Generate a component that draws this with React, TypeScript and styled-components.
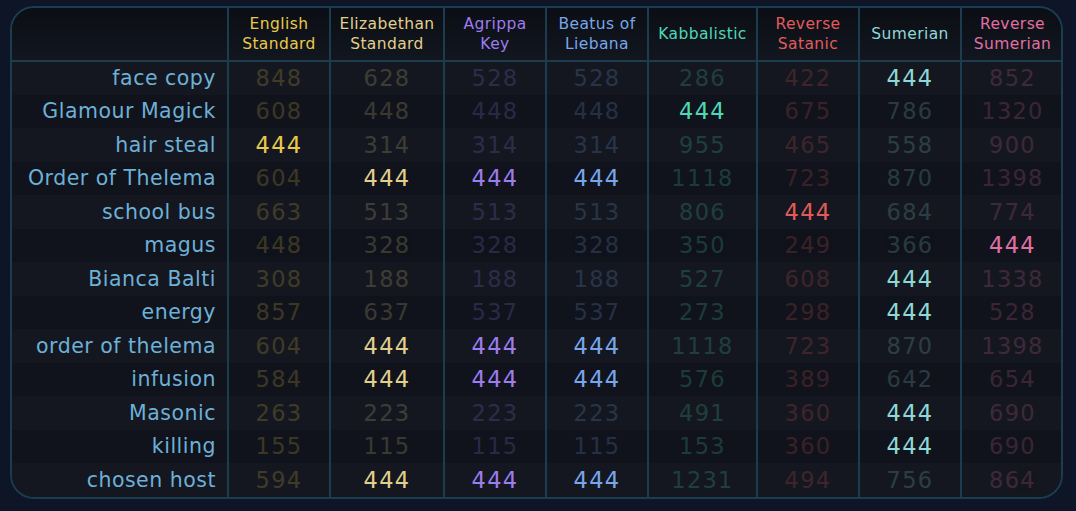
import styled, { createGlobalStyle } from 'styled-components';

const GlobalStyle = createGlobalStyle`
  body {
    margin: 0;
    background: #0e1526;
    font-family: 'DejaVu Sans', 'Liberation Sans', sans-serif;
  }
`;

type Cipher = {
  name: string[];
  color: string;
  width: number;
};

const ciphers: Cipher[] = [
  { name: ['English', 'Standard'], color: '#e8c94a', width: 102 },
  { name: ['Elizabethan', 'Standard'], color: '#e2cf8c', width: 114 },
  { name: ['Agrippa', 'Key'], color: '#9d7cec', width: 102 },
  { name: ['Beatus of', 'Liebana'], color: '#78a6ea', width: 102 },
  { name: ['Kabbalistic'], color: '#4ed8b8', width: 109 },
  { name: ['Reverse', 'Satanic'], color: '#e05c5c', width: 102 },
  { name: ['Sumerian'], color: '#8ed8d8', width: 102 },
  { name: ['Reverse', 'Sumerian'], color: '#e070a2', width: 102 },
];

const rows: [string, number[]][] = [
  ['face copy', [848, 628, 528, 528, 286, 422, 444, 852]],
  ['Glamour Magick', [608, 448, 448, 448, 444, 675, 786, 1320]],
  ['hair steal', [444, 314, 314, 314, 955, 465, 558, 900]],
  ['Order of Thelema', [604, 444, 444, 444, 1118, 723, 870, 1398]],
  ['school bus', [663, 513, 513, 513, 806, 444, 684, 774]],
  ['magus', [448, 328, 328, 328, 350, 249, 366, 444]],
  ['Bianca Balti', [308, 188, 188, 188, 527, 608, 444, 1338]],
  ['energy', [857, 637, 537, 537, 273, 298, 444, 528]],
  ['order of thelema', [604, 444, 444, 444, 1118, 723, 870, 1398]],
  ['infusion', [584, 444, 444, 444, 576, 389, 642, 654]],
  ['Masonic', [263, 223, 223, 223, 491, 360, 444, 690]],
  ['killing', [155, 115, 115, 115, 153, 360, 444, 690]],
  ['chosen host', [594, 444, 444, 444, 1231, 494, 756, 864]],
];

const Page = styled.main`
  padding: 6px 13px 0 10px;
`;

const Frame = styled.div`
  border: 2px solid #1c3d4f;
  border-radius: 24px;
  overflow: hidden;
  width: 1049px;
`;

const Table = styled.table`
  width: 100%;
  table-layout: fixed;
  border-collapse: collapse;
`;

const HeadRow = styled.tr`
  background: linear-gradient(180deg, #0b0e14 0%, #12161f 100%);
  height: 53px;
`;

const HeadCell = styled.th<{ $color: string }>`
  color: ${(p) => p.$color};
  font-size: 15.5px;
  letter-spacing: 0.4px;
  font-weight: 500;
  line-height: 20px;
  text-align: center;
  padding: 0;
  border-left: 2px solid #1c3d4f;
  border-bottom: 2px solid #1c3d4f;
`;

const Corner = styled.th`
  border-bottom: 2px solid #1c3d4f;
`;

const Row = styled.tr<{ $odd: boolean }>`
  height: 33.5px;
  background: ${(p) => (p.$odd ? '#14171f' : '#10131b')};
  & + & > td {
    border-top: 2px solid #1c3d4f;
  }
`;

const Label = styled.td`
  color: #6db0d8;
  font-size: 20.5px;
  letter-spacing: 0.5px;
  text-align: right;
  padding: 0 11px 0 0;
  white-space: nowrap;
`;

const Value = styled.td<{ $color: string; $hit: boolean }>`
  color: ${(p) => p.$color};
  opacity: ${(p) => (p.$hit ? 1 : 0.2)};
  font-size: 22.5px;
  letter-spacing: 1.3px;
  text-align: center;
  padding: 0;
  border-left: 2px solid #1c3d4f;
`;

export default function App() {
  return (
    <Page>
      <GlobalStyle />
      <Frame>
        <Table>
          <colgroup>
            <col style={{ width: 216 }} />
            {ciphers.map((c, i) => (
              <col key={i} style={{ width: c.width }} />
            ))}
          </colgroup>
          <thead>
            <HeadRow>
              <Corner />
              {ciphers.map((c, i) => (
                <HeadCell key={i} $color={c.color}>
                  {c.name.map((n, j) => (
                    <div key={j}>{n}</div>
                  ))}
                </HeadCell>
              ))}
            </HeadRow>
          </thead>
          <tbody>
            {rows.map(([label, vals], r) => (
              <Row key={r} $odd={r % 2 === 0}>
                <Label>{label}</Label>
                {vals.map((v, i) => (
                  <Value key={i} $color={ciphers[i].color} $hit={v === 444}>
                    {v}
                  </Value>
                ))}
              </Row>
            ))}
          </tbody>
        </Table>
      </Frame>
    </Page>
  );
}
